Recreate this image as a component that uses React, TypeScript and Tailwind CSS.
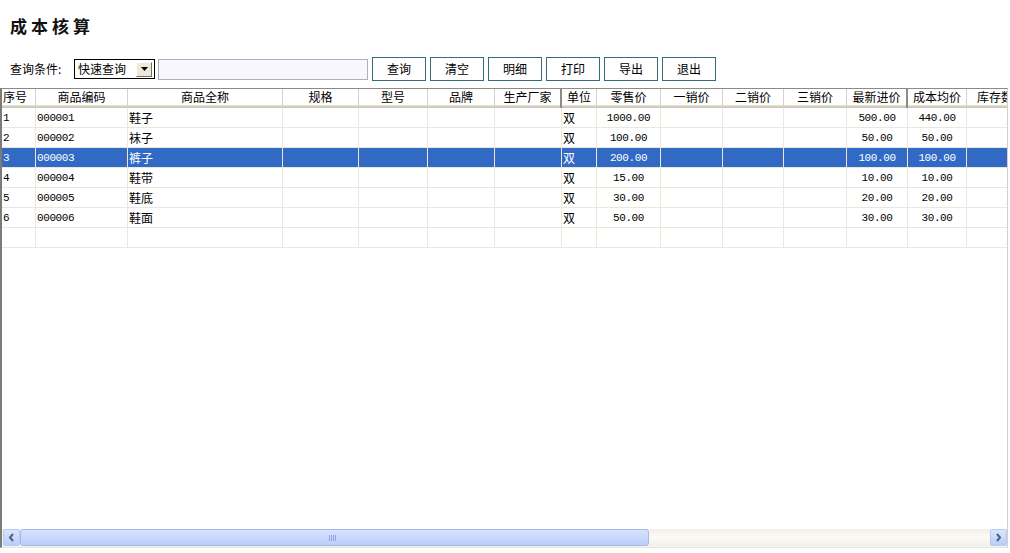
import React from "react";

type Col = {
  h: string;
  w: string;
  left?: boolean;
  dark?: boolean;
};

const cols: Col[] = [
  { h: "序号", w: "w-[34px]", left: true },
  { h: "商品编码", w: "w-[92px]", left: true },
  { h: "商品全称", w: "w-[155px]", left: true },
  { h: "规格", w: "w-[76px]" },
  { h: "型号", w: "w-[69px]" },
  { h: "品牌", w: "w-[67px]" },
  { h: "生产厂家", w: "w-[67px]", dark: true },
  { h: "单位", w: "w-[35px]", left: true },
  { h: "零售价", w: "w-[64px]" },
  { h: "一销价", w: "w-[62px]" },
  { h: "二销价", w: "w-[61px]" },
  { h: "三销价", w: "w-[63px]" },
  { h: "最新进价", w: "w-[61px]", dark: true },
  { h: "成本均价", w: "w-[59px]" },
  { h: "库存数", w: "w-[57px]" },
  { h: "", w: "w-[60px]" },
];

const rows: string[][] = [
  ["1", "000001", "鞋子", "", "", "", "", "双", "1000.00", "", "", "", "500.00", "440.00", "", ""],
  ["2", "000002", "袜子", "", "", "", "", "双", "100.00", "", "", "", "50.00", "50.00", "", ""],
  ["3", "000003", "裤子", "", "", "", "", "双", "200.00", "", "", "", "100.00", "100.00", "", ""],
  ["4", "000004", "鞋带", "", "", "", "", "双", "15.00", "", "", "", "10.00", "10.00", "", ""],
  ["5", "000005", "鞋底", "", "", "", "", "双", "30.00", "", "", "", "20.00", "20.00", "", ""],
  ["6", "000006", "鞋面", "", "", "", "", "双", "50.00", "", "", "", "30.00", "30.00", "", ""],
  ["", "", "", "", "", "", "", "", "", "", "", "", "", "", "", ""],
];

const isNum = (s: string) => /^[0-9.]+$/.test(s);

function Btn({ label }: { label: string }) {
  return (
    <div className="w-[54px] h-[24px] border border-[#356d80] bg-white flex items-center justify-center text-[12px] text-black shrink-0">
      {label}
    </div>
  );
}

export default function App() {
  return (
    <div className="w-[1010px] h-[553px] bg-white overflow-hidden flex flex-col font-[family-name:'Noto_Sans_CJK_SC','Liberation_Sans',sans-serif] text-black">
      {/* Title */}
      <div className="h-[57px] pl-[10px] pt-[14px] shrink-0">
        <div className="text-[17px] leading-[24px] font-bold tracking-[4px] text-[#111]">成本核算</div>
      </div>

      {/* Toolbar */}
      <div className="h-[24px] pl-[10px] flex items-center shrink-0">
        <div className="w-[64px] text-[12px] leading-[14px]">查询条件:</div>
        <div className="w-[81px] h-[20px] border border-black bg-white flex items-center justify-between pl-[3px] pr-[2px] shrink-0">
          <span className="text-[12px] leading-[14px]">快速查询</span>
          <div className="w-[16px] h-[15px] bg-[#ece9d8] border border-t-white border-l-white border-r-[#716f64] border-b-[#716f64] flex items-center justify-center">
            <svg width="7" height="4" viewBox="0 0 7 4">
              <path d="M0 0H7L3.5 4Z" fill="#000" />
            </svg>
          </div>
        </div>
        <div className="ml-[3px] w-[210px] h-[21px] border border-[#a7b2c6] bg-[#f7f7fc] shrink-0" />
        <div className="ml-[4px] flex gap-[4px]">
          <Btn label="查询" />
          <Btn label="清空" />
          <Btn label="明细" />
          <Btn label="打印" />
          <Btn label="导出" />
          <Btn label="退出" />
        </div>
      </div>

      {/* Grid */}
      <div className="mt-[7px] w-[1008px] h-[460px] border-l-2 border-l-[#7b7b7b] border-t border-t-[#8a8a8a] border-r border-r-[#d4d0c8] border-b border-b-[#e8e6dc] flex flex-col overflow-hidden shrink-0">
        <div className="flex-1 overflow-hidden">
          {/* Header */}
          <div className="flex h-[19px] w-max">
            {cols.map((c, i) => (
              <div
                key={i}
                className={`${c.w} shrink-0 h-[19px] flex flex-col bg-white ${c.dark ? "border-r-2 border-r-[#8d8b82]" : "border-r border-r-[#d6d3c6]"}`}
              >
                <div
                  className={`h-[16px] flex items-center text-[12px] leading-[14px] whitespace-nowrap overflow-hidden ${c.left && i === 0 ? "justify-start pl-[1px]" : "justify-center"}`}
                >
                  {c.h}
                </div>
                <div className="h-[1px] bg-[#e2decd]" />
                <div className="h-[1px] bg-[#d6d2c2]" />
                <div className="h-[1px] bg-[#cbc7b8]" />
              </div>
            ))}
          </div>
          {/* Rows */}
          {rows.map((r, ri) => {
            const sel = ri === 2;
            return (
              <div key={ri} className={`flex h-[20px] w-max ${sel ? "bg-[#316ac5] text-white" : "bg-white text-black"}`}>
                {cols.map((c, ci) => {
                  const v = r[ci];
                  const num = isNum(v);
                  const centered = !c.left;
                  return (
                    <div
                      key={ci}
                      className={`${c.w} shrink-0 h-[20px] border-r border-b border-[#ebe8db] flex items-center whitespace-nowrap overflow-hidden ${centered ? "justify-center" : "justify-start pl-[1px]"}`}
                    >
                      {v !== "" && (
                        <span
                          className={
                            num
                              ? "font-[family-name:'Liberation_Mono',monospace] text-[11px] tracking-[-0.4px] leading-[12px]"
                              : "text-[12px] leading-[14px]"
                          }
                        >
                          {v}
                        </span>
                      )}
                    </div>
                  );
                })}
              </div>
            );
          })}
        </div>

        {/* Horizontal scrollbar */}
        <div className="h-[18px] flex items-stretch pl-[1px] shrink-0 bg-[#f4f3ee]">
          <div className="w-[17px] h-[17px] rounded-[2px] border border-[#b8cbf5] bg-gradient-to-b from-[#dbe6fe] to-[#b9cdf8] flex items-center justify-center shrink-0">
            <svg width="7" height="9" viewBox="0 0 7 9">
              <path d="M5 1L2 4.5L5 8" stroke="#4d6185" strokeWidth="2" fill="none" />
            </svg>
          </div>
          <div className="w-[629px] h-[17px] rounded-[3px] border border-[#a4b9e8] bg-gradient-to-b from-[#d6e2fe] to-[#bccefa] flex items-center justify-center shrink-0">
            <div className="flex gap-[1px] ml-[-4px]">
              <div className="w-[1px] h-[6px] bg-[#8ea6dc]" />
              <div className="w-[1px] h-[6px] bg-[#8ea6dc]" />
              <div className="w-[1px] h-[6px] bg-[#8ea6dc]" />
              <div className="w-[1px] h-[6px] bg-[#8ea6dc]" />
            </div>
          </div>
          <div className="flex-1 h-[17px] bg-gradient-to-b from-[#f0efe8] via-[#fbfaf6] to-[#f1f0ea]" />
          <div className="w-[17px] h-[17px] rounded-[2px] border border-[#b8cbf5] bg-gradient-to-b from-[#dbe6fe] to-[#b9cdf8] flex items-center justify-center shrink-0">
            <svg width="7" height="9" viewBox="0 0 7 9">
              <path d="M2 1L5 4.5L2 8" stroke="#4d6185" strokeWidth="2" fill="none" />
            </svg>
          </div>
        </div>
      </div>
    </div>
  );
}
